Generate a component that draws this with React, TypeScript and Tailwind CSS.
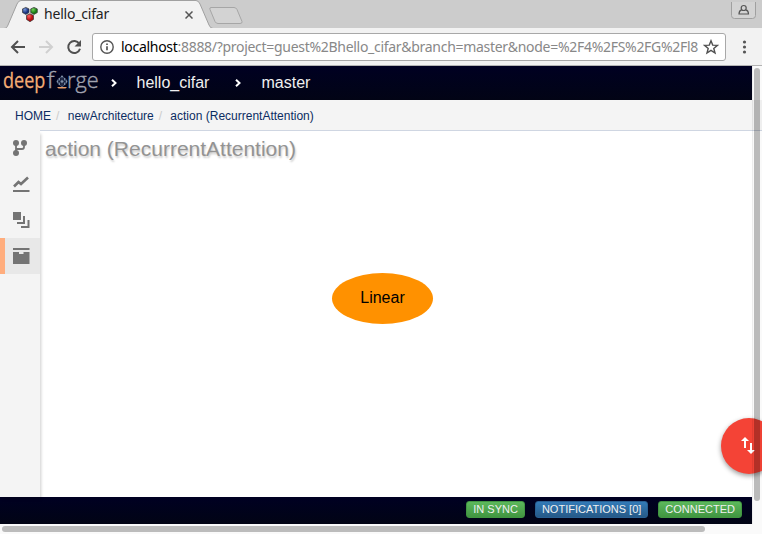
import React from "react";

const uiFont = "font-['Noto_Sans',sans-serif]";

function Favicon() {
  return (
    <svg className="block shrink-0" width="17" height="16" viewBox="0 0 17 16">
      <defs>
        <radialGradient id="blue" cx=".35" cy=".3"><stop offset="0" stopColor="#7898dc" /><stop offset="1" stopColor="#19337d" /></radialGradient>
        <radialGradient id="green" cx=".35" cy=".3"><stop offset="0" stopColor="#76d45c" /><stop offset="1" stopColor="#187c14" /></radialGradient>
        <radialGradient id="red" cx=".35" cy=".3"><stop offset="0" stopColor="#ff6060" /><stop offset="1" stopColor="#b40c10" /></radialGradient>
      </defs>
      <g stroke="#333" strokeWidth=".7" transform="translate(-.5 .7)">
        <path d="M4.300.7 7.500 2.200v3.700L4.300 7.700 1 5.900V2.200z" fill="url(#blue)" />
        <path d="m12.500.7 3.300 1.500v3.700l-3.300 1.800-3.300-1.800V2.200z" fill="url(#green)" />
        <path d="m8.500 7 3.500 1.700v4l-3.500 2.300L5 12.700v-4z" fill="url(#red)" />
      </g>
    </svg>
  );
}

function TabStrip() {
  return (
    <div className={`relative h-7 shrink-0 bg-[#cccccc] ${uiFont}`}>
      <svg className="absolute inset-0" width="762" height="29" viewBox="0 0 762 29">
        <path d="M0 28.500H762" stroke="#999" />
        <path d="M4 29 C7 28 7 27 8 25 L17 4 Q18.500 .5 21 .5 H196 Q198.500 .5 200 4 L209 25 Q210.500 28.500 213 29Z" fill="#f2f2f2" />
        <path d="M4 28.500 C7 28 7 27 8 25 L17 4 Q18.500 .5 21 .5 H196 Q198.500 .5 200 4 L209 25 Q210.500 28.500 213 28.500" fill="none" stroke="#a0a0a0" />
        <path d="M211 7.500h23q2 0 3 2l5 12q.5 2-2 2h-22q-2 0-3-2l-5-12q-.7-2 1-2z" fill="#d3d3d3" stroke="#a6a6a6" />
        <path d="M731.500 2v13.500q0 3 3 3h18q3 0 3-3V2" fill="#d3d3d3" stroke="#a0a0a0" />
        <circle cx="743.700" cy="8" r="2.500" fill="none" stroke="#555" strokeWidth="1.200" />
        <path d="M741.700 9.800q-2.700.7-2.700 4.200h9.500q0-3.500-2.700-4.200" fill="none" stroke="#555" strokeWidth="1.200" />
      </svg>
      <div className="relative flex h-7 w-[196px] items-center pl-[22px]">
        <Favicon />
        <span className="ml-[5px] text-[14px] leading-7 text-[#222] tracking-[-0.200px]">hello_cifar</span>
        <svg className="ml-auto mr-[3px] mt-0.5" width="8" height="8" viewBox="0 0 8 8"><path d="m.5.5 7 7m0-7-7 7" stroke="#555" strokeWidth="1.500" /></svg>
      </div>
    </div>
  );
}

function Toolbar() {
  return (
    <div className={`relative flex h-[38px] shrink-0 items-center border-b border-[#b4b4b4] bg-[#f2f2f2] ${uiFont}`}>
      <svg className="shrink-0" width="92" height="37" viewBox="0 0 92 37">
        <path d="M25 19H12m6-6-6 6 6 6" fill="none" stroke="#505050" strokeWidth="2" />
        <path d="M39 19h13m-6-6 6 6-6 6" fill="none" stroke="#d0d0d0" strokeWidth="2" />
        <path d="M79.300 15.800A6 6 0 1 0 80 20.800" fill="none" stroke="#505050" strokeWidth="2" />
        <path d="M81 12v6.500h-6.500z" fill="#505050" />
      </svg>
      <div className="flex h-7 w-[634px] shrink-0 items-center rounded-[3px] border border-[#a8a8a8] bg-white">
        <svg className="ml-[7px] shrink-0" width="14" height="14" viewBox="0 0 14 14"><circle cx="7" cy="7" r="6.200" fill="none" stroke="#555" strokeWidth="1.400" /><path d="M7 6.200v4M7 3.500v1.500" stroke="#555" strokeWidth="1.700" /></svg>
        <div className="ml-[7px] w-[578px] whitespace-nowrap text-[14px] tracking-[-0.295px] text-[#888]"><span className="text-black">localhost</span>:8888/?project=guest%2Bhello_cifar&amp;branch=master&amp;node=%2F4%2FS%2FG%2Fl8</div>
        <svg className="ml-1 shrink-0" width="16" height="16" viewBox="0 0 16 16"><path d="m8 1.800 1.700 4.300 4.700.3-3.600 3 1.200 4.600-4-2.600L4 14l1.200-4.600-3.600-3 4.700-.3z" fill="none" stroke="#505050" strokeWidth="1.400" /></svg>
      </div>
      <svg className="ml-4 shrink-0" width="5" height="16" viewBox="0 0 5 16" fill="#555"><circle cx="2.500" cy="3" r="1.600" /><circle cx="2.500" cy="8" r="1.600" /><circle cx="2.500" cy="13" r="1.600" /></svg>
    </div>
  );
}

function Logo() {
  return (
    <svg className="block shrink-0" width="100" height="34" viewBox="0 0 100 34">
      <g fontFamily="Open Sans" fontSize="21.500">
        <text transform="translate(3 21.500) scale(.84 1)" fill="#f5ac74" stroke="#f5ac74" strokeWidth=".25">deep</text>
        <text transform="translate(46.500 21.500) scale(1.250 1)" fill="#a2a4b0" stroke="#a2a4b0" strokeWidth=".3" fontWeight="300">f</text>
        <text transform="translate(67 21.500) scale(1.010 1)" fill="#a2a4b0" stroke="#a2a4b0" strokeWidth=".35" fontWeight="300">rge</text>
      </g>
      <g fill="none" stroke="#53688a" strokeWidth=".8"><path d="m62 10 4.500 4v3L62 21l-4.500-4v-3zM57.500 14l9 3m0-3-9 3M62 10v11" /></g>
      <g fill="#8292aa"><circle cx="62" cy="10.500" r="1" /><circle cx="57.500" cy="15.500" r=".9" /><circle cx="66.500" cy="15.500" r=".9" /><circle cx="59.500" cy="13" r=".9" /><circle cx="64.500" cy="13" r=".9" /><circle cx="59.500" cy="18" r=".9" /><circle cx="64.500" cy="18" r=".9" /><circle cx="62" cy="15.500" r="1.200" /></g>
      <path d="M57 21h10l-1.500 1.500h-7z" fill="#e99c66" />
    </svg>
  );
}

function Chevron() {
  return <svg className="block shrink-0" width="6" height="10" viewBox="0 0 6 10"><path d="m1 1.700 3.500 3.300L1 8.300" fill="none" stroke="white" strokeWidth="2" /></svg>;
}

function SideIcon({ kind }: { kind: string }) {
  return (
    <svg className="block" width="18" height="18" viewBox="0 0 18 18" fill="#747474">
      {kind === "branch" && <><circle cx="4" cy="4" r="3" /><circle cx="12" cy="4" r="3" /><circle cx="4" cy="14" r="3" /><path d="M4 4v10M4 10h6q2 0 2-2V4" fill="none" stroke="#747474" strokeWidth="1.800" /></>}
      {kind === "chart" && <><path d="m2 11.500 4.500-4.500 2.500 2L16 2.500" fill="none" stroke="#747474" strokeWidth="2.600" /><path d="M1 15h16.500v2H1z" /></>}
      {kind === "layers" && <><path d="M1 1h8v8H1z" /><path d="M12 5v7H5M16.500 9v7H9" fill="none" stroke="#747474" strokeWidth="2" /></>}
      {kind === "box" && <><path d="M1 1h16.500v2H1zM1 5h6v2h4.500V5h6v12H1z" /></>}
    </svg>
  );
}

function Badge({ children, blue }: { children: React.ReactNode; blue?: boolean }) {
  return <span className={`flex h-[17px] items-center whitespace-nowrap rounded-[3px] border px-1.5 text-[11px] leading-none text-[#f0f0f0] ${blue ? "border-[#285f92] bg-linear-to-b from-[#337ab7] to-[#265a88]" : "border-[#419641] bg-linear-to-b from-[#5cb85c] to-[#419641]"}`}>{children}</span>;
}

export default function App() {
  return (
    <div className="flex h-[534px] w-[762px] flex-col overflow-hidden bg-white font-['Liberation_Sans',Arial,sans-serif]">
      <TabStrip />
      <Toolbar />
      <div className="relative flex min-h-0 flex-1 flex-col overflow-hidden">
        <header className="flex h-[34px] w-[752px] shrink-0 items-center bg-linear-to-b from-[#000022] to-[#020415] text-base text-[#f0f0f0]">
          <Logo />
          <span className="ml-[10.500px]"><Chevron /></span>
          <span className="ml-[20px] w-[74px]">hello_cifar</span>
          <span className="ml-[24.500px]"><Chevron /></span>
          <span className="ml-[20.500px]">master</span>
        </header>
        <nav className="flex h-[30px] shrink-0 items-center bg-[#f4f4f4] pl-[15px] pt-0.5 text-xs text-[#0b2c62]">
          <span>HOME</span><span className="ml-[5px] w-3 text-[#ccc]">/</span>
          <span className="-ml-[0.300px]">newArchitecture</span><span className="ml-[5px] w-3 text-[#ccc]">/</span>
          <span className="-ml-[0.400px]">action (RecurrentAttention)</span>
        </nav>
        <div className="flex h-[367px] shrink-0">
          <aside className="z-10 w-10 shrink-0 bg-[#f4f4f4] shadow-[2px_3px_3px_-1px_rgba(0,0,0,0.2)]">
            {["branch", "chart", "layers", "box"].map((kind) => (
              <div key={kind} className={`flex h-9 items-center ${kind === "box" ? "border-l-[5px] border-[#ffad7d] bg-[#e8e8e8] pl-[7px]" : "pl-3"}`}><SideIcon kind={kind} /></div>
            ))}
          </aside>
          <main className="flex min-w-0 flex-1 flex-col border-t border-[#cfd6e2] bg-white">
            <h1 className="ml-[5px] mt-[5px] text-[21px] leading-[26px] text-[#939393] [text-shadow:1px_2px_2px_#ccc]">action (RecurrentAttention)</h1>
            <div className="ml-[292px] mt-[111px] flex h-[51px] w-[101px] shrink-0 items-center justify-center rounded-[50%] bg-[#ff9100] pb-px text-base text-black">Linear</div>
          </main>
        </div>
        <footer className="flex h-[27px] w-[752px] shrink-0 items-center justify-end gap-2.5 bg-linear-to-b from-[#000022] to-[#020415] pb-[3px] pr-2.5">
          <Badge>IN SYNC</Badge><Badge blue>NOTIFICATIONS [0]</Badge><Badge>CONNECTED</Badge>
        </footer>
        <div className="h-2.5 shrink-0 bg-[#fafafa] pt-[2px]"><div className="ml-[2px] h-1.5 w-[703px] rounded-full bg-[#bcbcbc]" /></div>
        <div className="absolute left-[721px] top-[352px] flex h-14 w-14 items-center rounded-full bg-[#f44336] pl-[19px] shadow-[0_2px_5px_rgba(0,0,0,0.4)]">
          <svg width="16" height="20" viewBox="0 0 16 20" fill="white"><path d="M1 5 5 1l4 4H6v7H4V5zM7 14l4 4 4-4h-3V7h-2v7z" /></svg>
        </div>
        <div className="absolute right-0 top-0 h-[458px] w-2.5 border-l border-black/5 bg-black/[0.02] pl-px pt-[2px]"><div className="h-[433px] w-1.5 rounded-full bg-black/25" /></div>
      </div>
    </div>
  );
}
